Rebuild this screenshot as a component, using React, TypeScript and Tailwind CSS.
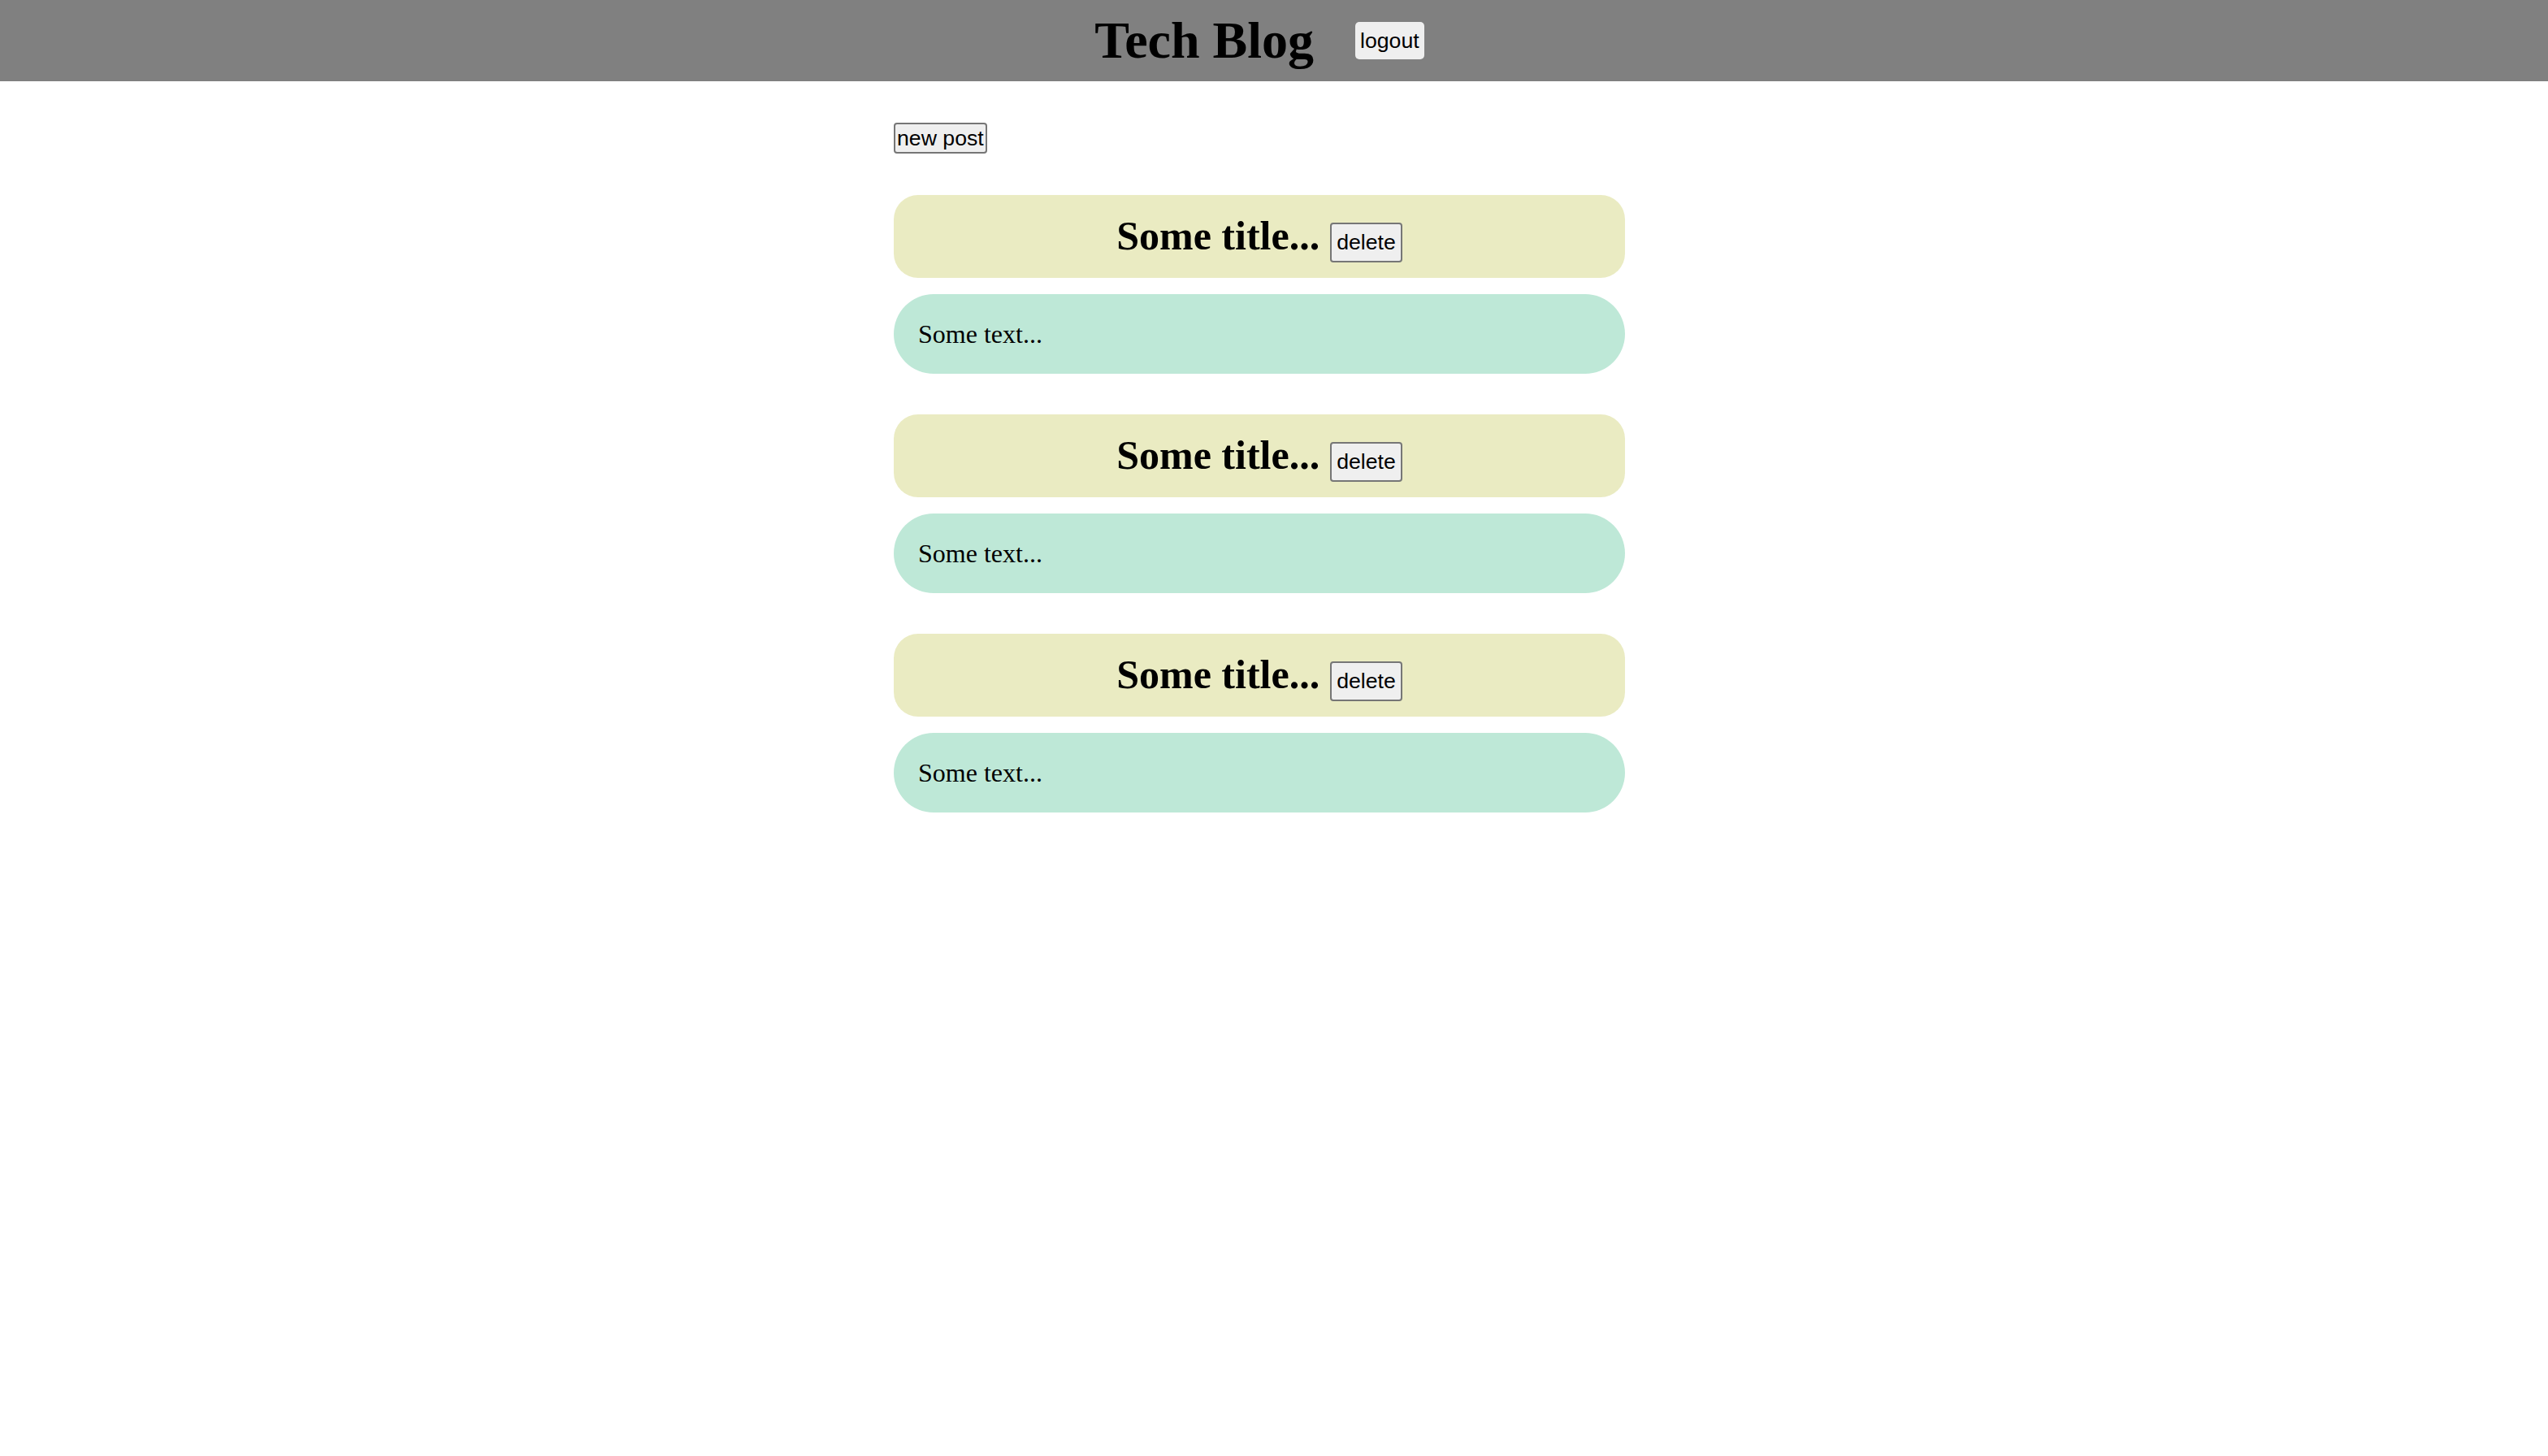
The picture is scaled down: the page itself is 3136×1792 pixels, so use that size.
import React from 'react';

const posts = [
  { id: 1, title: 'Some title...', text: 'Some text...' },
  { id: 2, title: 'Some title...', text: 'Some text...' },
  { id: 3, title: 'Some title...', text: 'Some text...' },
];

const Post: React.FC<{ title: string; text: string }> = ({ title, text }) => (
  <div className="flex flex-col gap-[20px]">
    <div className="h-[102px] rounded-[30px] bg-[#eaebc2] pt-[25px] flex justify-center">
      <div className="flex items-baseline gap-[13px]">
        <h2 className="text-[50px] leading-none font-bold font-['Liberation_Serif',serif] text-black">
          {title}
        </h2>
        <button className="h-[49px] px-[6px] border-2 border-[#767676] rounded-[4px] bg-[#efefef] text-[26.67px] text-black font-['Liberation_Sans',Arial,sans-serif]">
          delete
        </button>
      </div>
    </div>
    <div className="h-[98px] rounded-full bg-[#bee8d7] px-[30px] flex items-center">
      <p className="text-[32px] font-['Liberation_Serif',serif] text-black">{text}</p>
    </div>
  </div>
);

export default function App() {
  return (
    <div className="min-h-screen bg-white">
      {/* top bar */}
      <header className="h-[100px] bg-[#808080] pr-[36px] flex items-center justify-center gap-[51px]">
        <h1 className="text-[64px] leading-none font-bold font-['Liberation_Serif',serif] text-black">
          Tech Blog
        </h1>
        <button className="h-[46px] px-[6px] rounded-[5px] bg-[#efefef] text-[26.67px] text-black font-['Liberation_Sans',Arial,sans-serif]">
          logout
        </button>
      </header>

      <div className="pr-[36px]">
        <main className="w-[900px] mx-auto pt-[51px] flex flex-col items-start gap-[51px]">
          <button className="h-[38px] px-[2px] border-2 border-[#767676] rounded-[4px] bg-[#efefef] text-[26.67px] leading-none text-black font-['Liberation_Sans',Arial,sans-serif]">
            new post
          </button>
          <div className="w-full flex flex-col gap-[50px]">
            {posts.map((p) => (
              <Post key={p.id} title={p.title} text={p.text} />
            ))}
          </div>
        </main>
      </div>
    </div>
  );
}
